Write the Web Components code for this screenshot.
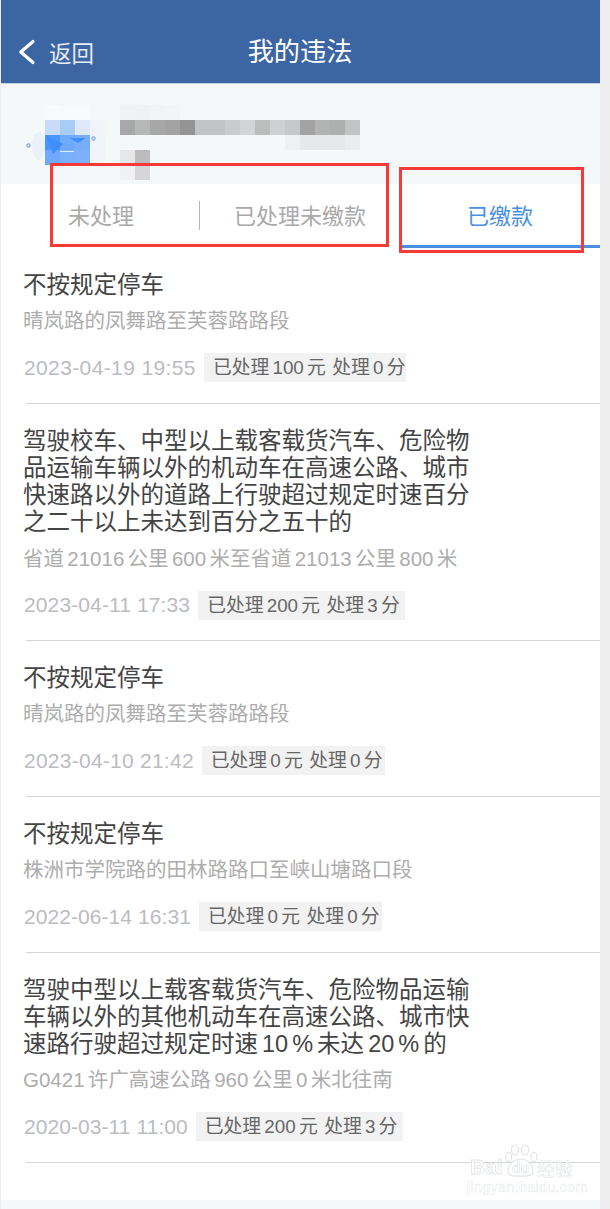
<!DOCTYPE html>
<html lang="zh">
<head>
<meta charset="utf-8">
<title>我的违法</title>
<style>
    html, body { margin: 0; padding: 0; background: #eeeeee; }
    body {
        width: 610px;
        height: 1209px;
        overflow: hidden;
        position: relative;
        font-family: "Liberation Sans", "Noto Sans CJK SC", sans-serif;
    }
    #page { width: 599px; margin-left: 1px; background: #fff; height: 1209px; display: flex; flex-direction: column; }
</style>
</head>
<body>
<div id="page">
    <app-header back="返回">我的违法</app-header>
    <profile-card></profile-card>
    <tab-bar></tab-bar>
    <violation-row style="--ls:.38px;--pr:1px" date="2023-04-19 19:55" place="晴岚路的凤舞路至芙蓉路路段" result="已处理 100 元&nbsp; 处理 0 分">不按规定停车</violation-row>
    <violation-row style="--ls:.12px;--pr:5px" date="2023-04-11 17:33" place="省道 21016 公里 600 米至省道 21013 公里 800 米" result="已处理 200 元&nbsp; 处理 3 分">驾驶校车、中型以上载客载货汽车、危险物品运输车辆以外的机动车在高速公路、城市快速路以外的道路上行驶超过规定时速百分之二十以上未达到百分之五十的</violation-row>
    <violation-row style="--ls:.25px;--pr:3px" date="2023-04-10 21:42" place="晴岚路的凤舞路至芙蓉路路段" result="已处理 0 元&nbsp; 处理 0 分">不按规定停车</violation-row>
    <violation-row style="--ls:.07px;--pr:2px" date="2022-06-14 16:31" place="株洲市学院路的田林路路口至峡山塘路口段" result="已处理 0 元&nbsp; 处理 0 分">不按规定停车</violation-row>
    <violation-row style="--ls:.07px;--pr:6px" date="2020-03-11 11:00" place="G0421 许广高速公路 960 公里 0 米北往南" result="已处理 200 元&nbsp; 处理 3 分">驾驶中型以上载客载货汽车、危险物品运输车辆以外的其他机动车在高速公路、城市快速路行驶超过规定时速 10 % 未达 20 % 的</violation-row>
    <page-foot></page-foot>
</div>
<red-box style="left:50px;top:163px;width:339px;height:84px"></red-box>
<red-box style="left:399px;top:167px;width:185px;height:86px"></red-box>
<baidu-mark></baidu-mark>

<script>
const FONT = `"Liberation Sans", "Noto Sans CJK SC", sans-serif`;

class AppHeader extends HTMLElement {
    constructor() {
        super();
        this.attachShadow({ mode: "open" });
        this.shadowRoot.innerHTML = `
            <style>
                :host { display: block; flex: none; height: 84px; background: #3c65a3; color: #fff; font-family: ${FONT}; box-sizing: border-box; border-bottom: 1px solid #c4d0e2; }
                .bar { height: 83px; display: flex; align-items: center; position: relative; padding-top: 21px; box-sizing: border-box; }
                .back { display: flex; align-items: center; gap: 13px; padding-left: 17px; font-size: 22.5px; color: #e6ecf5; }
                svg { display: block; }
                .title { position: absolute; left: 0; right: 0; top: 17px; bottom: 0; display: flex; align-items: center; justify-content: center; font-size: 26.2px; padding-right: 1px; }
            </style>
            <div class="bar">
                <div class="back">
                    <svg width="18" height="26" viewBox="0 0 18 26"><path d="M15 2.5 L2.8 13 L15 23.5" fill="none" stroke="#fff" stroke-width="3.2" stroke-linecap="round" stroke-linejoin="round"/></svg>
                    <span id="back"></span>
                </div>
                <div class="title"><slot></slot></div>
            </div>`;
        this.shadowRoot.getElementById("back").textContent = this.getAttribute("back");
    }
}
customElements.define("app-header", AppHeader);

class ProfileCard extends HTMLElement {
    constructor() {
        super();
        this.attachShadow({ mode: "open" });
        // mosaic cells of the blurred name and car badge: x, y, colour (15px squares)
        const cells = [
            [45,105,"#f8fafc"],[60,105,"#f7f9fb"],[75,105,"#f7f9fb"],
            [45,120,"#c8dbf8"],[60,120,"#a9cbf8"],[75,120,"#dde9fb"],[90,120,"#f0f4f9"],
            [45,135,"#4a97fb"],[60,135,"#6fa9f9"],[75,135,"#78aef8"],[90,135,"#f0f5fa"],
            [45,150,"#70a8fb"],[60,150,"#78b0fa"],[75,150,"#7cb0f9"],[90,150,"#f1f5fa"],
            [120,105,"#f0f2f3"],[135,105,"#eff1f2"],[150,105,"#f1f3f4"],[165,105,"#f2f4f5"],
            [120,120,"#a8a8a8"],[135,120,"#b6b8b8"],[150,120,"#a6a7a6"],[165,120,"#a3a3a3"],[180,120,"#939493"],
            [195,120,"#c2c3c4"],[210,120,"#c2c3c4"],[225,120,"#c9cccd"],[240,120,"#d3d4d5"],[255,120,"#bcbdbd"],
            [270,120,"#cfd0d1"],[285,120,"#c6c8c9"],[300,120,"#a3a3a3"],[315,120,"#b2b3b3"],[330,120,"#aeafaf"],[345,120,"#c2c3c3"],
            [285,135,"#eef0f1"],[300,135,"#e6e8e9"],[315,135,"#e6e8e9"],[330,135,"#e6e8e9"],[345,135,"#eaeced"],
            [120,150,"#e6e8e8"],[135,150,"#bcbcbc"],[120,165,"#f0f1f2"],[135,165,"#d6d6d6"]
        ];
        const rects = cells.map(([x, y, c]) => `<rect x="${x}" y="${y - 84}" width="15" height="15" fill="${c}"/>`).join("");
        this.shadowRoot.innerHTML = `
            <style>
                :host { display: block; flex: none; height: 100px; background: #f4f8f9; }
                svg { display: block; }
            </style>
            <svg width="599" height="100" viewBox="1 0 599 100">
                <ellipse cx="39" cy="62" rx="7" ry="14" fill="#eaf1fb"/>
                ${rects}
                <path d="M46 52 L53 70 L63 60 Z M70 54 L86 54 L78 59 Z" fill="#3f8efb"/>
                <rect x="60" y="67" width="14" height="1" fill="#dfeafc"/>
                <circle cx="28.5" cy="61.5" r="1.6" fill="none" stroke="#7fa9e0" stroke-width="1.2"/>
                <circle cx="93.5" cy="54.5" r="1.6" fill="none" stroke="#7fa9e0" stroke-width="1.2"/>
            </svg>`;
    }
}
customElements.define("profile-card", ProfileCard);

class TabBar extends HTMLElement {
    constructor() {
        super();
        this.attachShadow({ mode: "open" });
        this.shadowRoot.innerHTML = `
            <style>
                :host { display: flex; flex: none; height: 64px; background: #fff; font-family: ${FONT}; font-size: 22px; color: #a9a9a9; position: relative; }
                .tab { display: flex; align-items: center; justify-content: center; padding-bottom: 5px; box-sizing: border-box; white-space: nowrap; }
                .a { width: 199px; padding-left: 67px; justify-content: flex-start; }
                .b { width: 200px; padding-left: 34px; justify-content: flex-start; border-left: 0; }
                .c { width: 200px; color: #4a90e2; border-bottom: 3px solid #4a90e2; padding-bottom: 1px; }
                .sep { width: 1px; height: 29px; background: #b4b4b4; align-self: flex-start; margin-top: 17px; flex: none; margin-left: -1px; }
            </style>
            <div class="tab a">未处理</div>
            <div class="sep"></div>
            <div class="tab b">已处理未缴款</div>
            <div class="tab c">已缴款</div>`;
    }
}
customElements.define("tab-bar", TabBar);

class ViolationRow extends HTMLElement {
    constructor() {
        super();
        this.attachShadow({ mode: "open" });
        this.shadowRoot.innerHTML = `
            <style>
                :host { display: block; flex: none; background: #fff; font-family: ${FONT}; padding: 24px 0 0 22px; }
                .title { font-size: 23.5px; line-height: 27.2px; color: #444; width: 455px; word-spacing: -2.5px; }
                .place { font-size: 20.5px; line-height: 28px; color: #adadad; margin-top: 8px; white-space: nowrap; word-spacing: -2.4px; }
                .meta { display: flex; align-items: center; gap: 8px; height: 29px; margin: 18px 0 0 1px; }
                .date { font-size: 21px; color: #bbbcc2; white-space: nowrap; letter-spacing: var(--ls, 0); }
                .tag { font-size: 18.8px; color: #666; background: #f2f2f2; height: 29px; line-height: 29px; padding: 0 var(--pr, 4px) 0 9px; white-space: nowrap; word-spacing: -2px; }
                .line { height: 1px; background: #d6d6d6; margin: 20.6px 0 0 3px; }
            </style>
            <div class="title"><slot></slot></div>
            <div class="place" id="place"></div>
            <div class="meta">
                <span class="date" id="date"></span>
                <span class="tag" id="result"></span>
            </div>
            <div class="line"></div>`;
        this.shadowRoot.getElementById("place").textContent = this.getAttribute("place");
        this.shadowRoot.getElementById("date").textContent = this.getAttribute("date");
        this.shadowRoot.getElementById("result").textContent = this.getAttribute("result");
    }
}
customElements.define("violation-row", ViolationRow);

class PageFoot extends HTMLElement {
    constructor() {
        super();
        this.attachShadow({ mode: "open" });
        this.shadowRoot.innerHTML = `
            <style>
                :host { display: flex; flex: 1; flex-direction: column; background: #fff; }
                .strip { margin-top: auto; height: 9px; background: #f4f8f9; }
            </style>
            <div class="strip"></div>`;
    }
}
customElements.define("page-foot", PageFoot);

class RedBox extends HTMLElement {
    constructor() {
        super();
        this.attachShadow({ mode: "open" });
        this.shadowRoot.innerHTML = `
            <style>
                :host { display: block; position: absolute; box-sizing: border-box; border: 3px solid #f93838; }
            </style>`;
    }
}
customElements.define("red-box", RedBox);

class BaiduMark extends HTMLElement {
    constructor() {
        super();
        this.attachShadow({ mode: "open" });
        this.shadowRoot.innerHTML = `
            <style>
                :host { display: block; position: absolute; left: 466px; top: 1142px; width: 122px; height: 56px; font-family: ${FONT}; color: #fff; filter: blur(0.5px); }
                span, svg { position: absolute; white-space: nowrap; }
                svg { left: 38px; top: 2px; }
                .bai { left: 4px; top: 13px; font-size: 21px; line-height: 24px; font-weight: 700; -webkit-text-stroke: 0.8px #e2e4e5; }
                .du { left: 46px; top: 18px; font-size: 14px; line-height: 16px; font-weight: 700; -webkit-text-stroke: 0.6px #e2e4e5; }
                .cn { left: 71px; top: 18px; font-size: 18px; line-height: 20px; -webkit-text-stroke: 0.5px #e2e4e5; }
                .url { left: 1px; top: 37px; font-size: 14.6px; line-height: 16px; letter-spacing: 0.2px; -webkit-text-stroke: 0.5px #e8eaea; }
            </style>
            <svg width="36" height="36" viewBox="0 0 36 36" fill="#fff" stroke="#e2e4e5" stroke-width="1.2">
                <ellipse cx="4.5" cy="13" rx="3" ry="4.6"/>
                <ellipse cx="11" cy="6" rx="3.6" ry="5"/>
                <ellipse cx="21" cy="6" rx="3.6" ry="5"/>
                <ellipse cx="30" cy="13" rx="3" ry="4.6"/>
                <path d="M4 27 C4 20 11 15 17 15 C23 15 29 20 29 27 C29 33 22 32 17 32 C11 32 4 33 4 27 Z"/>
            </svg>
            <span class="bai">Bai</span>
            <span class="du">du</span>
            <span class="cn">经验</span>
            <span class="url">jingyan.baidu.com</span>`;
    }
}
customElements.define("baidu-mark", BaiduMark);
</script>
</body>
</html>
